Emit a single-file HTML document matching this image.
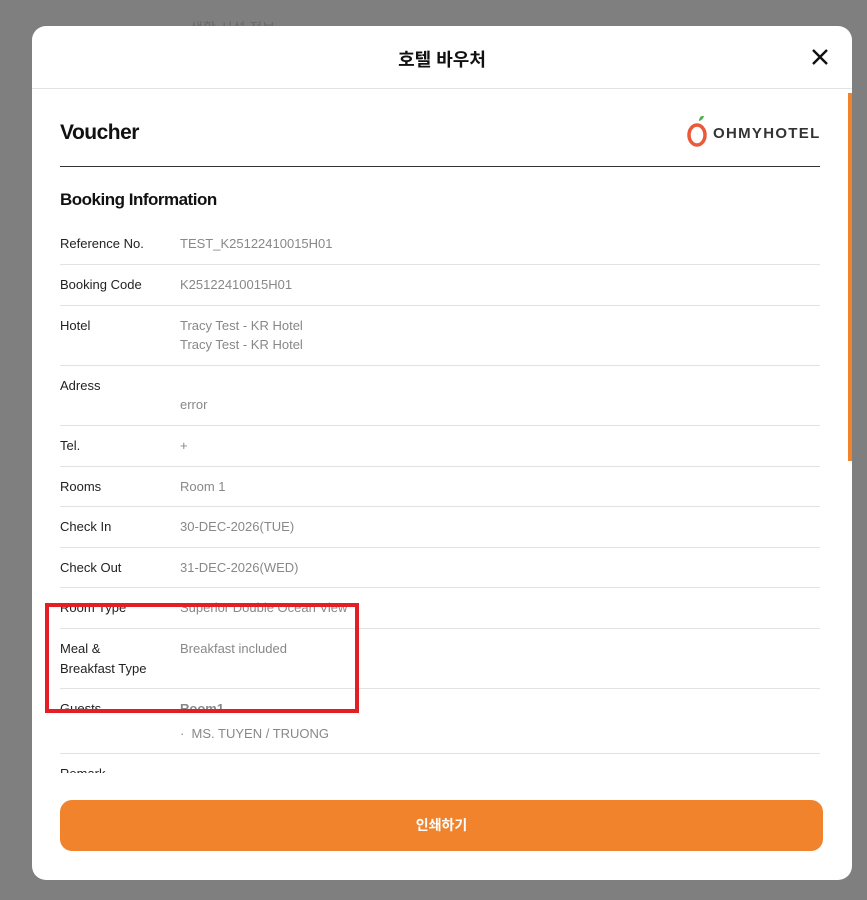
<!DOCTYPE html><html><head><meta charset="utf-8"><style>
body{margin:0;width:867px;height:900px;background:#7f7f7f;position:relative;overflow:hidden;font-family:"Liberation Sans","Noto Sans CJK KR",sans-serif;}
.m{position:absolute;left:32px;top:26px;width:820px;height:854px;background:#fff;border-radius:14px;overflow:hidden}
.a{position:absolute;white-space:nowrap}
.l{position:absolute;left:28px;width:760px;height:1px;background:#e2e2e2}
.k{position:absolute;left:28px;font-size:13px;color:#222;line-height:20px}
.v{position:absolute;left:148px;font-size:13px;color:#888;line-height:19px;white-space:nowrap}
</style></head><body>
<div class="a" style="left:190px;top:18px;color:#6a6a6a;font-size:14px">생활 시설 정보</div>
<div class="m">
<div class="a" style="left:0;width:820px;top:20px;text-align:center;font-size:18px;font-weight:bold;color:#111">호텔 바우처</div>
<svg class="a" style="left:779px;top:22px" width="18" height="18" viewBox="0 0 18 18"><path d="M2 2L16 16M16 2L2 16" stroke="#111" stroke-width="2.4"/></svg>
<div class="a" style="left:0;top:62px;width:820px;height:1px;background:#e2e2e2"></div>
<div class="a" style="left:816px;top:67px;width:4px;height:368px;background:#f0832b"></div>
<div class="a" style="left:28px;top:95px;font-size:21px;font-weight:bold;color:#111;letter-spacing:-0.5px">Voucher</div>
<svg class="a" style="left:653px;top:89px" width="26" height="34" viewBox="0 0 26 34"><path d="M14 5Q15 0 19 1Q18 5 14 6Z" fill="#4caf50"/><ellipse cx="12" cy="20" rx="8" ry="10" fill="none" stroke="#ea5a3a" stroke-width="3.5"/></svg>
<div class="a" style="left:681px;top:99px;font-size:15px;font-weight:bold;color:#333;letter-spacing:1.3px">OHMYHOTEL</div>
<div class="a" style="left:28px;top:140px;width:760px;height:1px;background:#333"></div>
<div class="a" style="left:28px;top:164px;font-size:17px;font-weight:bold;color:#111;letter-spacing:-0.5px">Booking Information</div>
<div style="position:absolute;left:0;top:0;width:820px;height:747px;overflow:hidden">
<div class="k" style="top:208px">Reference No.</div><div class="v" style="top:208px">TEST_K25122410015H01</div><div class="l" style="top:238px"></div>
<div class="k" style="top:249px">Booking Code</div><div class="v" style="top:249px">K25122410015H01</div><div class="l" style="top:279px"></div>
<div class="k" style="top:290px">Hotel</div><div class="v" style="top:290px">Tracy Test - KR Hotel<br>Tracy Test - KR Hotel</div><div class="l" style="top:339px"></div>
<div class="k" style="top:350px">Adress</div><div class="v" style="top:369px">error</div><div class="l" style="top:399px"></div>
<div class="k" style="top:410px">Tel.</div><div class="v" style="top:410px">+</div><div class="l" style="top:440px"></div>
<div class="k" style="top:451px">Rooms</div><div class="v" style="top:451px">Room 1</div><div class="l" style="top:480px"></div>
<div class="k" style="top:491px">Check In</div><div class="v" style="top:491px">30-DEC-2026(TUE)</div><div class="l" style="top:521px"></div>
<div class="k" style="top:532px">Check Out</div><div class="v" style="top:532px">31-DEC-2026(WED)</div><div class="l" style="top:561px"></div>
<div class="k" style="top:572px">Room Type</div><div class="v" style="top:572px">Superior Double Ocean View</div><div class="l" style="top:602px"></div>
<div class="k" style="top:613px">Meal &amp;<br>Breakfast Type</div><div class="v" style="top:613px">Breakfast included</div><div class="l" style="top:662px"></div>
<div class="k" style="top:673px">Guests</div><div class="v" style="top:673px;font-weight:bold">Room1</div><div class="v" style="top:698px">· &nbsp;MS. TUYEN / TRUONG</div><div class="l" style="top:727px"></div>
<div class="k" style="top:738px">Remark</div>
</div>
<div class="a" style="left:28px;top:774px;width:763px;height:51px;background:#f0832b;border-radius:12px;color:#fff;font-size:14px;font-weight:bold;text-align:center;line-height:51px">인쇄하기</div>
</div>
<div class="a" style="left:45px;top:603px;width:306px;height:102px;border:4px solid #e31e24"></div>
</body></html>
